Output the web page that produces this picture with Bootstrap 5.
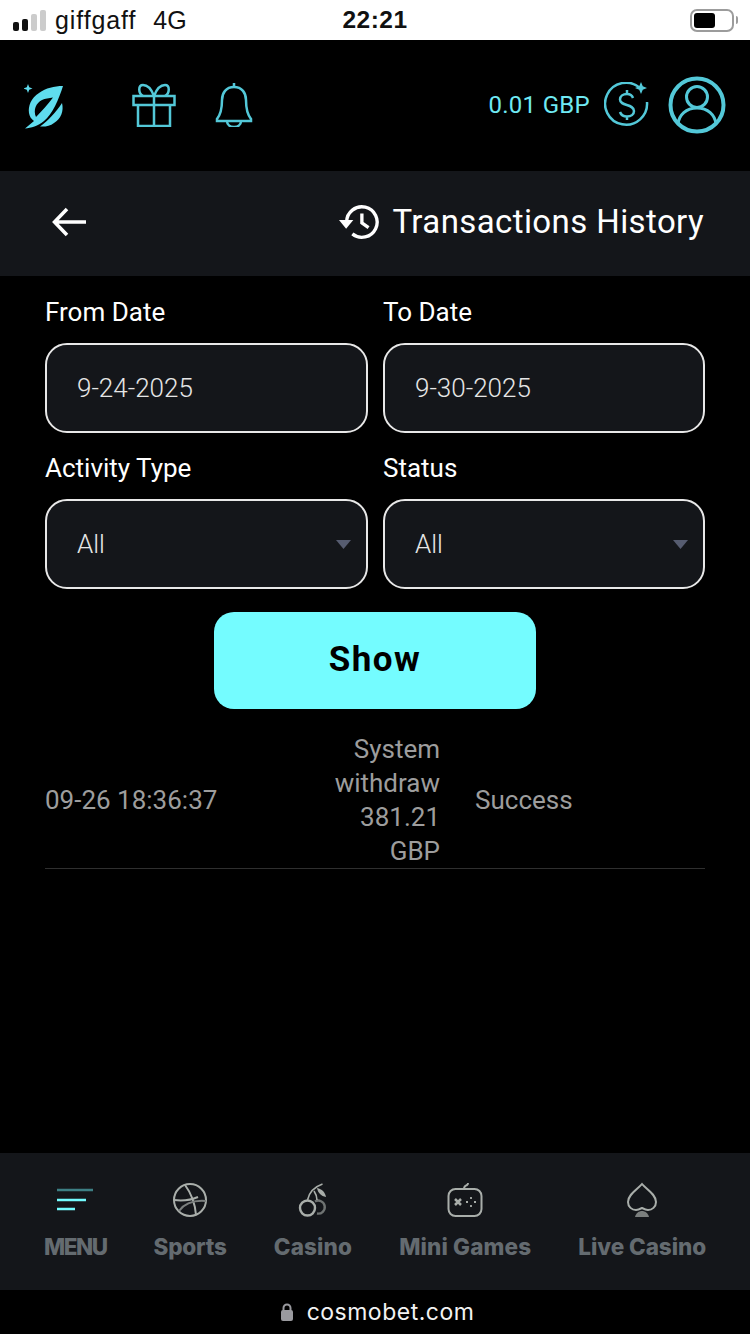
<!DOCTYPE html>
<html lang="en">
<head>
  <meta charset="UTF-8">
  <meta name="viewport" content="width=device-width, initial-scale=1.0">
  <title>Transactions History</title>
  <link href="https://cdn.jsdelivr.net/npm/bootstrap@5.3.0/dist/css/bootstrap.min.css" rel="stylesheet">
  <style>
    body {
      background-color: #000;
      font-family: Roboto, "Liberation Sans", sans-serif;
      color: #fff;
    }
    .screen { height: 1334px; overflow: hidden; }
    .status-bar { height: 40px; background: #fff; color: #111; line-height: 1; padding: 0 12px 0 13px; }
    .carrier { font-family: "Liberation Sans", sans-serif; font-size: 25px; letter-spacing: .9px; }
    .network { font-family: "Liberation Sans", sans-serif; font-size: 25px; margin-left: 17px; }
    .clock { font-family: "Liberation Sans", sans-serif; font-weight: 700; font-size: 24.500px; letter-spacing: .5px; width: 100%; text-align: center; }
    .signal { gap: 3px; align-items: flex-end; margin-right: 9px; }
    .signal i { display: block; width: 6px; border-radius: 2px; background: #111; }
    .battery { width: 44px; height: 23px; border: 2px solid #9c9c9c; border-radius: 7px; padding: 2px; }
    .battery i { display: block; width: 21px; height: 15px; background: #000; border-radius: 3px; }
    .battery-nub { width: 2px; height: 8px; background: #9c9c9c; margin-left: 2px; border-radius: 0 2px 2px 0; }
    .top-bar { height: 131px; padding: 0 24px 2px 24px; background: #000; }
    .balance { color: #6fe9f3; font-size: 24px; letter-spacing: .3px; }
    .title-bar { height: 105px; background: #14161a; padding: 0 46px 3px 52px; }
    .title-text { font-size: 33px; font-weight: 400; letter-spacing: .4px; margin: 0; }
    .filter-form { padding: 20px 45px 0; display: grid; grid-template-columns: 323px 322px; column-gap: 15px; }
    .filter-form label { font-size: 26px; line-height: 32px; margin-bottom: 15px; color: #fff; }
    .filter-field { margin-bottom: 19px; }
    .filter-form .form-control,
    .filter-form .form-select {
      height: 90px;
      background-color: #14161a;
      border: 2px solid #e8e8e8;
      border-radius: 22px;
      color: #e6e6e6;
      font-size: 26px;
      font-weight: 300;
      padding: 0 30px;
      box-shadow: none;
    }
    .filter-form .form-select {
      background-image: url("data:image/svg+xml,%3Csvg xmlns='http://www.w3.org/2000/svg' width='15' height='9'%3E%3Cpath d='M0 0h15L7.500 9z' fill='%23565c70'/%3E%3C/svg%3E");
      background-position: right 15px center;
      background-size: 15px 9px;
    }
    .show-wrap { padding-top: 23px; }
    .show-btn {
      display: block; width: 322px; height: 97px; margin: 0 auto 24px;
      background: #74fcff; border: 0; border-radius: 20px; color: #000;
      font-size: 35px; font-weight: 700; letter-spacing: 1.500px;
    }
    .show-btn:hover { background: #74fcff; color: #000; }
    .tx-row { margin: 0 45px; border-bottom: 1px solid #2f2f2f; color: #9d9d9d; font-size: 26px; line-height: 34px; height: 136px; padding-bottom: 2px; }
    .tx-date { width: 275px; }
    .tx-amount { width: 120px; text-align: right; }
    .tx-status { margin-left: 35px; }
    .bottom-nav { height: 137px; background: #14161a; padding: 29px 44px 0; gap: 47px; }
    .nav-cell { font-family: Inter, "Open Sans", sans-serif; font-weight: 800; font-size: 22.500px; color: #646b70; line-height: 1; letter-spacing: .15px; white-space: nowrap; }
    .nav-cell svg { display: block; margin: 0 auto 18px; }
    .nav-menu { letter-spacing: -1.500px; }
    .nav-sports { letter-spacing: -.2px; }
    .nav-live { letter-spacing: -.05px; }
    .url-bar { height: 44px; background: #000; padding-left: 4px; font-family: Inter, "Liberation Sans", sans-serif; font-size: 23px; letter-spacing: .5px; color: #f2f2f2; }
    .url-bar svg { margin-right: 13px; }
  </style>
</head>
<body>
  <div class="screen d-flex flex-column">
    <!-- phone status bar -->
    <div class="status-bar d-flex align-items-center position-relative">
      <div class="signal d-flex">
        <i style="height:9px"></i><i style="height:12px"></i><i style="height:17px;background:#ccc"></i><i style="height:21px;background:#ccc"></i>
      </div>
      <span class="carrier">giffgaff</span>
      <span class="network">4G</span>
      <div class="clock position-absolute start-0">22:21</div>
      <div class="d-flex align-items-center ms-auto">
        <div class="battery"><i></i></div><div class="battery-nub"></div>
      </div>
    </div>

    <!-- site header -->
    <div class="top-bar d-flex align-items-center justify-content-between">
      <div class="d-flex align-items-center">
        <svg width="42" height="48" viewBox="0 0 42 48" fill="#5fdcee">
          <path d="M4 3l1.200 3.300L8.500 7.500 5.200 8.700 4 12 2.800 8.700-.5 7.500l3.300-1.200z"/>
          <path d="M39 5C30 5 22 7 15 12 7 17 4 25 5 32c.5 3 2 6 5 8L1 47.500C7 47 14 45 20 40 28 34 35 18 39 5zM12 36c-3-7 0-14 6-17 3-1.500 7-2 11-2.500-5 6.500-11 13.500-17 19.500z" fill-rule="evenodd"/>
          <path d="M38 22c2 8-1 16-8 20-4 3-9 4-14 3.500 8-6 16-14 22-23.500z"/>
        </svg>
        <svg style="margin-left:66px" width="44" height="44" viewBox="0 0 44 44" fill="none" stroke="#53c8d8" stroke-width="2.500">
          <rect x="1.500" y="13" width="41" height="9"/>
          <path d="M6 22v21h32V22M22 13v30"/>
          <path d="M22 13c-3-8-7-11-11-11-5 0-5 8 0 11M22 13c3-8 7-11 11-11 5 0 5 8 0 11"/>
        </svg>
        <svg style="margin-left:39px" width="38" height="44" viewBox="0 0 38 44" fill="none" stroke="#53c8d8" stroke-width="2.500">
          <path d="M19 4C11 4 7 10 7 17c0 8-1 14-5 19v2h34v-2c-4-5-5-11-5-19 0-7-4-13-12-13z"/>
          <path d="M19 0v4M12 38c0 8 14 8 14 0"/>
        </svg>
      </div>
      <div class="d-flex align-items-center">
        <span class="balance">0.01 GBP</span>
        <svg style="margin-left:14px" width="46" height="46" viewBox="0 0 46 46" fill="none" stroke="#53c8d8" stroke-width="2.500">
          <path d="M36 6A21 21 0 1 0 43 20"/>
          <path d="M29 16c-1-3-3-4-6-4-4 0-7 2-7 5.500 0 7 14 4 14 11.500 0 3.500-3 5.500-7 5.500-3 0-6-1.500-7-4.500M23 8v4M23 34v4"/>
          <path d="M37 0l1.800 4.200L43 6l-4.200 1.800L37 12l-1.800-4.200L31 6l4.200-1.800z" fill="#53c8d8" stroke="none"/>
        </svg>
        <svg style="margin-left:18px" width="58" height="58" viewBox="0 0 58 58" fill="none" stroke="#53c8d8">
          <circle cx="29" cy="29" r="26.500" stroke-width="4"/>
          <circle cx="29" cy="21" r="10.500" stroke-width="3"/>
          <path d="M10 48c1-9 8-16 19-16s18 7 19 16" stroke-width="3"/>
        </svg>
      </div>
    </div>

    <!-- page title -->
    <div class="title-bar d-flex align-items-center justify-content-between">
      <svg width="34" height="30" viewBox="0 0 34 30" fill="none" stroke="#fff" stroke-width="3.500">
        <path d="M34 15H3M15 2L2.500 15 15 28"/>
      </svg>
      <div class="d-flex align-items-center">
        <svg style="margin-right:12px" width="41" height="36" viewBox="0 0 43 36" fill="none" stroke="#fff" stroke-width="3.500">
          <path d="M8 18A16 16 0 1 1 14 30.500"/>
          <path d="M0 16h15l-7.500 9z" fill="#fff" stroke="none"/>
          <path d="M24 9v10l7 5"/>
        </svg>
        <h1 class="title-text">Transactions History</h1>
      </div>
    </div>

    <!-- filters -->
    <form class="filter-form">
      <div class="filter-field">
        <label class="d-block" for="from-date">From Date</label>
        <input id="from-date" class="form-control" type="text" value="9-24-2025">
      </div>
      <div class="filter-field">
        <label class="d-block" for="to-date">To Date</label>
        <input id="to-date" class="form-control" type="text" value="9-30-2025">
      </div>
      <div class="filter-field mb-0">
        <label class="d-block" for="activity">Activity Type</label>
        <select id="activity" class="form-select"><option>All</option></select>
      </div>
      <div class="filter-field mb-0">
        <label class="d-block" for="status">Status</label>
        <select id="status" class="form-select"><option>All</option></select>
      </div>
    </form>
    <div class="show-wrap">
      <button class="btn show-btn" type="button">Show</button>
    </div>

    <div class="tx-row d-flex align-items-center">
      <div class="tx-date">09-26 18:36:37</div>
      <div class="tx-amount">System withdraw 381.21 GBP</div>
      <div class="tx-status">Success</div>
    </div>

    <div class="flex-grow-1"></div>

    <!-- bottom nav -->
    <nav class="bottom-nav d-flex align-items-start">
      <div class="nav-cell nav-menu text-center">
        <svg width="36" height="36" viewBox="0 0 36 36" stroke-width="2.500">
          <path d="M0 8h36" stroke="#3d7f84"/><path d="M0 18h29" stroke="#74fcff"/><path d="M0 27h18" stroke="#74fcff"/>
        </svg>
        MENU
      </div>
      <div class="nav-cell nav-sports text-center">
        <svg width="36" height="36" viewBox="0 0 36 36" fill="none" stroke="#a9aeaa" stroke-width="2">
          <circle cx="18" cy="18" r="16"/>
          <path d="M2 18c8 1 17 0 24-3M13 3c6 8 10 18 11 30"/>
          <path d="M7 29c5-7 14-11 27-10" stroke="#7b7f7e"/>
        </svg>
        Sports
      </div>
      <div class="nav-cell text-center">
        <svg width="32" height="36" viewBox="0 0 32 36" fill="none" stroke="#a9aeaa" stroke-width="2.400">
          <circle cx="10.500" cy="26" r="7.500"/>
          <path d="M18 19.500a6.500 6.500 0 1 1 2 12" stroke="#6f7372"/>
          <path d="M10.500 18c1.500-7 6.500-13 15-16M17 9c2 3 3 6 3 9" stroke-width="1.600"/>
          <path d="M20 6c5 1 8 4 9 9-5-1-8-4-9-9z" fill="#a9aeaa" stroke="none"/>
        </svg>
        Casino
      </div>
      <div class="nav-cell text-center">
        <svg width="36" height="36" viewBox="0 0 36 36" fill="none" stroke="#a9aeaa" stroke-width="2">
          <rect x="1.500" y="7" width="33" height="27" rx="7"/>
          <path d="M17 7c0-3 1-3 3-4 1-.5 1-1 1-2"/>
          <path d="M8 17l6 6M14 17l-6 6" stroke-width="2.500"/>
          <path d="M19 20h2M24 15v2M24 23v2M27 20h2" stroke-width="1.800"/>
        </svg>
        Mini Games
      </div>
      <div class="nav-cell nav-live text-center">
        <svg width="30" height="36" viewBox="0 0 30 36" fill="none" stroke="#a9aeaa" stroke-width="2">
          <path d="M15 2C11 7 1 12 1 20c0 5 4 8 8 8 2 0 4-1 6-2 2 1 4 2 6 2 4 0 8-3 8-8 0-8-10-13-14-18z"/>
          <path d="M8 35c1-4 4-6 7-6s6 2 7 6z" fill="#7b7f7e" stroke="none"/>
        </svg>
        Live Casino
      </div>
    </nav>

    <!-- browser url bar -->
    <div class="url-bar d-flex align-items-center justify-content-center">
      <svg width="14" height="20" viewBox="0 0 14 20">
        <path d="M3.500 9V6a3.500 3.500 0 0 1 7 0v3" fill="none" stroke="#9a9a9f" stroke-width="2"/>
        <rect x="1" y="8" width="12" height="11" rx="2" fill="#9a9a9f"/>
      </svg>
      <span>cosmobet.com</span>
    </div>
  </div>
  <script src="https://cdn.jsdelivr.net/npm/bootstrap@5.3.0/dist/js/bootstrap.bundle.min.js"></script>
</body>
</html>
